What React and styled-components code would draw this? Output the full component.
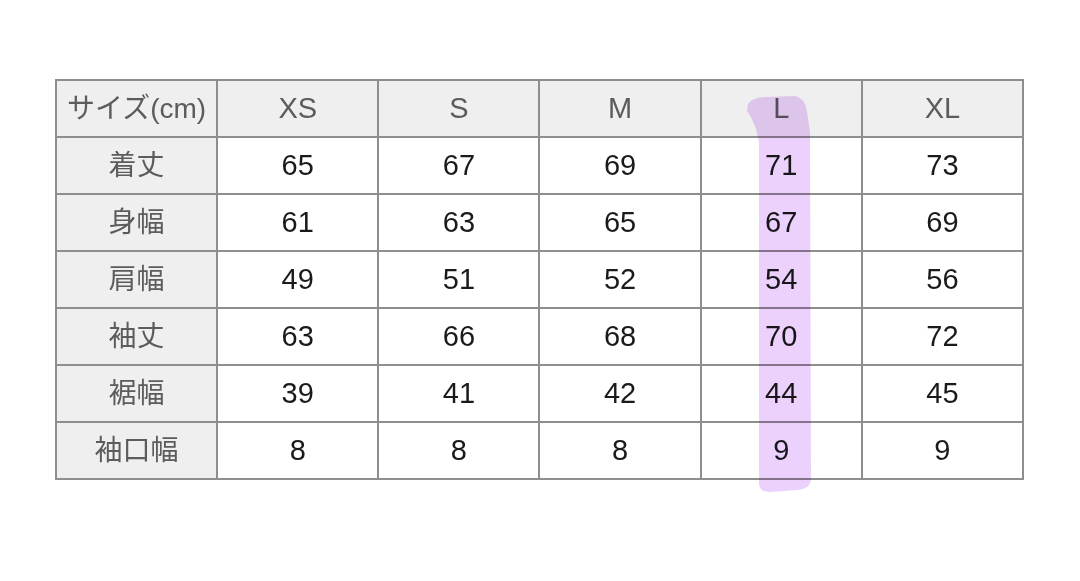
import React from 'react';
import styled, { createGlobalStyle } from 'styled-components';

const GlobalStyle = createGlobalStyle`
  html, body {
    margin: 0;
    padding: 0;
    background: #ffffff;
  }
  body {
    font-family: "Liberation Sans", "Noto Sans CJK JP", sans-serif;
  }
`;

const Page = styled.div`
  width: 1080px;
  height: 581px;
  padding: 79px 0 0 55px;
  box-sizing: border-box;
  position: relative;
  overflow: hidden;
`;

const Table = styled.table`
  border-collapse: collapse;
  width: 969px;
  table-layout: fixed;
  border: 2px solid #9a9a9a;
`;

const Cell = styled.td`
  height: 55px;
  padding: 0;
  border: 2px solid #8e8e8e;
  text-align: center;
  vertical-align: middle;
  font-size: ${(p) => (p.$jp ? '28px' : '29px')};
  line-height: 1;
  background: ${(p) => (p.$head ? '#efefef' : '#ffffff')};
  color: ${(p) => (p.$head ? '#5c5c5c' : '#1a1a1a')};
  font-family: "Liberation Sans", "Noto Sans CJK JP", sans-serif;
`;

const Marker = styled.svg`
  position: absolute;
  left: 0;
  top: 0;
  width: 1080px;
  height: 581px;
  pointer-events: none;
  mix-blend-mode: multiply;
`;

const sizes = ['XS', 'S', 'M', 'L', 'XL'];

const rows = [
  ['着丈', 65, 67, 69, 71, 73],
  ['身幅', 61, 63, 65, 67, 69],
  ['肩幅', 49, 51, 52, 54, 56],
  ['袖丈', 63, 66, 68, 70, 72],
  ['裾幅', 39, 41, 42, 44, 45],
  ['袖口幅', 8, 8, 8, 9, 9],
];

const App = () => (
  <>
    <GlobalStyle />
    <Page>
      <Table>
        <tbody>
          <tr>
            <Cell $head $jp>サイズ(cm)</Cell>
            {sizes.map((s) => (
              <Cell $head key={s}>{s}</Cell>
            ))}
          </tr>
          {rows.map(([label, ...vals]) => (
            <tr key={label}>
              <Cell $head $jp>{label}</Cell>
              {vals.map((v, i) => (
                <Cell key={i}>{v}</Cell>
              ))}
            </tr>
          ))}
        </tbody>
      </Table>
      <Marker viewBox="0 0 1080 581">
        <path
          d="M748 104 C752 99 758 97 766 97 L795 96 C803 98 806 104 807 112 L810 132 L811 478 C811 486 806 489 798 490 L770 492 C762 492 759 489 759 482 L759 142 C757 128 752 118 747 111 Z"
          fill="#e6c6fa"
          fillOpacity="0.8"
        />
      </Marker>
    </Page>
  </>
);

export default App;
